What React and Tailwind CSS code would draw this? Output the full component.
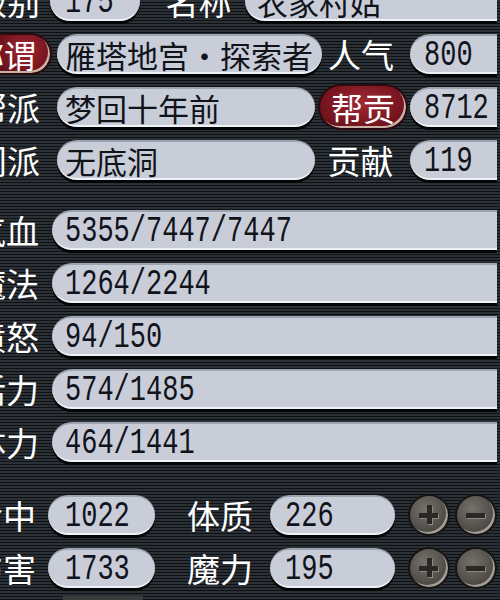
import React from 'react'

const cjk = "font-['Noto_Sans_CJK_SC',sans-serif]"

function Pill({ className = '', children }) {
  return (
    <div className={`h-[40px] shrink-0 flex items-center overflow-hidden rounded-l-full bg-[#c8cdd8] border-t-2 border-t-[#9ea4b0] border-b-2 border-b-[#eef1f5] shadow-[0_3px_0_#030506] text-[#10131a] ${className}`}>
      {children}
    </div>
  )
}

function Num({ children }) {
  return (
    <span className="inline-block origin-left scale-x-[0.75] whitespace-nowrap font-['Liberation_Mono',monospace] text-[36px] leading-none translate-y-[2px]">
      {children}
    </span>
  )
}

function Zh({ children }) {
  return <span className={`${cjk} whitespace-nowrap text-[31px] leading-none`}>{children}</span>
}

function Label({ children, className = '' }) {
  return (
    <div className={`shrink-0 flex overflow-hidden whitespace-nowrap text-white ${cjk} text-[33px] leading-none ${className}`}>
      {children}
    </div>
  )
}

function RoundBtn({ minus }) {
  return (
    <div className="w-[42px] h-[42px] shrink-0 rounded-full border-2 border-[#161514] bg-[radial-gradient(circle_at_40%_35%,#76726b,#54514c_55%,#33312e)] shadow-[inset_-2px_-2px_0_#a29d95] flex items-center justify-center">
      <svg width="24" height="24" viewBox="0 0 24 24">
        {minus ? (
          <>
            <rect x="3" y="11" width="19" height="5" fill="#8e8981" />
            <rect x="2" y="10" width="19" height="5" fill="#2a2826" />
          </>
        ) : (
          <>
            <rect x="11" y="3" width="5" height="19" fill="#8e8981" />
            <rect x="3" y="11" width="19" height="5" fill="#8e8981" />
            <rect x="10" y="2" width="5" height="19" fill="#2a2826" />
            <rect x="2" y="10" width="19" height="5" fill="#2a2826" />
          </>
        )}
      </svg>
    </div>
  )
}

const redPill = 'bg-[radial-gradient(ellipse_at_50%_40%,#a02a36,#7a1620_60%,#5a0e16)] border-2 border-[#2a0c10] shadow-[inset_-2px_-2px_0_#c8b2a6] text-white'

export default function App() {
  return (
    <div className="w-[500px] h-[600px] overflow-hidden bg-[repeating-linear-gradient(to_bottom,#2a3035_0px,#2a3035_2px,#0e1114_2px,#0e1114_3px)]">
      <div className="flex flex-col">
        {/* top block */}
        <div className="flex flex-col gap-[13px] -mt-[19px]">
          <div className="flex items-center h-[40px]">
            <Label className="w-[40px] justify-end">级别</Label>
            <Pill className="ml-[10px] w-[90px] rounded-r-full pl-[15px]"><Num>175</Num></Pill>
            <Label className="w-[105px] justify-center pl-[12px]">名称</Label>
            <Pill className="w-[252px] rounded-r-[4px] pl-[12px]"><Zh>农家村姑</Zh></Pill>
          </div>

          <div className="flex items-center h-[40px]">
            <div className={`w-[52px] h-[42px] shrink-0 rounded-r-full flex items-center justify-end pr-[14px] overflow-hidden ${redPill} border-l-0`}>
              <span className={`${cjk} text-[32px] leading-none whitespace-nowrap`}>称谓</span>
            </div>
            <Pill className="ml-[5px] w-[265px] rounded-r-full pl-[8px]">
              <Zh>雁塔地宫<span className="inline-block w-[31px] text-center">·</span>探索者</Zh>
            </Pill>
            <Label className="w-[88px] justify-center pr-[10px]">人气</Label>
            <Pill className="w-[87px] rounded-r-[4px] pl-[14px]"><Num>800</Num></Pill>
          </div>

          <div className="flex items-center h-[40px]">
            <Label className="w-[40px] justify-end">帮派</Label>
            <Pill className="ml-[17px] w-[258px] rounded-r-full pl-[8px]"><Zh>梦回十年前</Zh></Pill>
            <div className={`ml-[3px] w-[90px] h-[46px] shrink-0 rounded-full flex items-center justify-center ${redPill}`}>
              <span className={`${cjk} text-[32px] leading-none`}>帮贡</span>
            </div>
            <Pill className="ml-[2px] w-[87px] rounded-r-[4px] pl-[14px]"><Num>8712</Num></Pill>
          </div>

          <div className="flex items-center h-[40px]">
            <Label className="w-[40px] justify-end">门派</Label>
            <Pill className="ml-[17px] w-[258px] rounded-r-full pl-[8px]"><Zh>无底洞</Zh></Pill>
            <Label className="w-[95px] justify-center pr-[4px]">贡献</Label>
            <Pill className="w-[87px] rounded-r-[4px] pl-[14px]"><Num>119</Num></Pill>
          </div>
        </div>

        {/* bars */}
        <div className="flex flex-col gap-[13px] mt-[30px]">
          {[
            ['气血', '5355/7447/7447'],
            ['魔法', '1264/2244'],
            ['愤怒', '94/150'],
            ['活力', '574/1485'],
            ['体力', '464/1441'],
          ].map(([k, v]) => (
            <div key={k} className="flex items-center h-[40px]">
              <Label className="w-[39px] justify-end">{k}</Label>
              <Pill className="ml-[13px] w-[445px] rounded-r-[4px] pl-[13px]"><Num>{v}</Num></Pill>
            </div>
          ))}
        </div>

        {/* attributes */}
        <div className="flex flex-col gap-[13px] mt-[33px]">
          {[
            ['命中', '1022', '体质', '226'],
            ['伤害', '1733', '魔力', '195'],
          ].map(([a, av, b, bv]) => (
            <div key={a} className="flex items-center h-[40px]">
              <Label className="w-[36px] justify-end">{a}</Label>
              <Pill className="ml-[12px] w-[107px] rounded-r-full pl-[17px]"><Num>{av}</Num></Pill>
              <Label className="w-[115px] justify-center pl-[15px]">{b}</Label>
              <Pill className="w-[125px] rounded-r-full pl-[15px]"><Num>{bv}</Num></Pill>
              <div className="ml-[13px] flex gap-[5px]">
                <RoundBtn />
                <RoundBtn minus />
              </div>
            </div>
          ))}
        </div>

        <div className="mt-[8px] ml-[63px] w-[80px] h-[10px] bg-[#3a3b3c]" />
      </div>
    </div>
  )
}
